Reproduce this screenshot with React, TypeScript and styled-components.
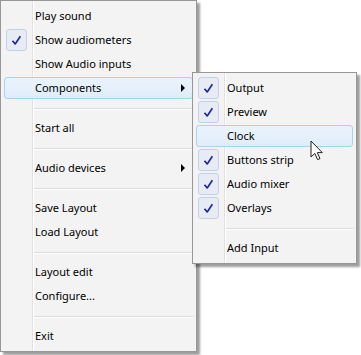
import React from 'react'
import styled, { createGlobalStyle } from 'styled-components'

const GlobalStyle = createGlobalStyle`
    html, body {
        margin: 0;
        padding: 0;
        background: #ffffff;
    }
    body {
        font-family: 'Noto Sans', 'Open Sans', sans-serif;
        font-size: 11px;
        color: #000000;
    }
`

type Entry =
    | { kind: 'item'; label: string; checked?: boolean; hot?: boolean; submenu?: boolean }
    | { kind: 'sep' }

const mainEntries: Entry[] = [
    { kind: 'item', label: 'Play sound' },
    { kind: 'item', label: 'Show audiometers', checked: true },
    { kind: 'item', label: 'Show Audio inputs' },
    { kind: 'item', label: 'Components', hot: true, submenu: true },
    { kind: 'sep' },
    { kind: 'item', label: 'Start all' },
    { kind: 'sep' },
    { kind: 'item', label: 'Audio devices', submenu: true },
    { kind: 'sep' },
    { kind: 'item', label: 'Save Layout' },
    { kind: 'item', label: 'Load Layout' },
    { kind: 'sep' },
    { kind: 'item', label: 'Layout edit' },
    { kind: 'item', label: 'Configure...' },
    { kind: 'sep' },
    { kind: 'item', label: 'Exit' }
]

const subEntries: Entry[] = [
    { kind: 'item', label: 'Output', checked: true },
    { kind: 'item', label: 'Preview', checked: true },
    { kind: 'item', label: 'Clock', hot: true },
    { kind: 'item', label: 'Buttons strip', checked: true },
    { kind: 'item', label: 'Audio mixer', checked: true },
    { kind: 'item', label: 'Overlays', checked: true },
    { kind: 'sep' },
    { kind: 'item', label: 'Add Input' }
]

const CheckIcon = () => (
    <svg width="11" height="11" viewBox="0 0 11 11">
        <path d="M1.5 5.8 L4.2 9 L9.4 1.2" fill="none" stroke="#1b239e" strokeWidth="1.6" strokeLinejoin="round" />
    </svg>
)

const Cursor = () => (
    <svg width="14" height="21" viewBox="0 0 14 21">
        <path
            d="M1 1 L1 17 L4.8 13.4 L7.6 19.6 L10 18.6 L7.3 12.6 L12.3 12.6 Z"
            fill="#ffffff"
            stroke="#202020"
            strokeWidth="1"
            strokeLinejoin="round"
        />
    </svg>
)

const MenuList = ({ entries }: { entries: Entry[] }) => (
    <>
        {entries.map((e, i) =>
            e.kind === 'sep' ? (
                <Separator key={i} />
            ) : (
                <Item key={i} hot={e.hot}>
                    <Gutter>
                        {e.checked && (
                            <CheckBox>
                                <CheckIcon />
                            </CheckBox>
                        )}
                    </Gutter>
                    <Label>{e.label}</Label>
                    {e.submenu && <Arrow />}
                </Item>
            )
        )}
    </>
)

const App = () => {
    return (
        <>
            <GlobalStyle />
            <Stage>
                <Menu left={0} top={0} width={197}>
                    <MenuList entries={mainEntries} />
                </Menu>
                <Menu left={192} top={72} width={165}>
                    <MenuList entries={subEntries} />
                </Menu>
                <CursorSpot>
                    <Cursor />
                </CursorSpot>
            </Stage>
        </>
    )
}

const Stage = styled.div`
    position: relative;
    width: 361px;
    height: 355px;
    overflow: hidden;
`

// popup menus float over the page, so they sit at their screen spots
const Menu = styled.div<{ left: number; top: number; width: number }>`
    position: absolute;
    left: ${({ left }) => left}px;
    top: ${({ top }) => top}px;
    width: ${({ width }) => width}px;
    box-sizing: border-box;
    display: flex;
    flex-direction: column;
    padding: 4px 3px 2px 3px;
    background: #f3f3f3;
    border: 1px solid #979797;
    box-shadow: 3px 3px 2px rgba(0, 0, 0, 0.38);

    &::before {
        content: '';
        position: absolute;
        top: 0;
        bottom: 0;
        left: 31px;
        width: 1px;
        background: #e1e1e1;
        box-shadow: 1px 0 0 #ffffff;
    }
`

const Item = styled.div<{ hot?: boolean }>`
    position: relative;
    box-sizing: border-box;
    height: 22px;
    margin-bottom: 2px;
    display: flex;
    align-items: center;
    border: 1px solid ${({ hot }) => (hot ? '#a8d3ee' : 'transparent')};
    border-radius: 3px;
    background: ${({ hot }) => (hot ? 'linear-gradient(#eaf3fc, #dfedf9)' : 'transparent')};
`

const Gutter = styled.span`
    flex: none;
    width: 30px;
    height: 100%;
    display: flex;
    align-items: center;
    padding-left: 1px;
    box-sizing: border-box;
`

const Label = styled.span`
    flex: 1;
    white-space: nowrap;
    line-height: 16px;
`

const CheckBox = styled.span`
    width: 21px;
    height: 22px;
    margin: -1px 0;
    box-sizing: border-box;
    display: flex;
    align-items: center;
    justify-content: center;
    border: 1px solid #c2d0e8;
    border-radius: 3px;
    background: #e6ebf5;
`

const Arrow = styled.span`
    flex: none;
    margin-right: 7px;
    width: 0;
    height: 0;
    border-left: 4px solid #000000;
    border-top: 4px solid transparent;
    border-bottom: 4px solid transparent;
`

const Separator = styled.div`
    height: 1px;
    margin: 7px 0 7px 29px;
    background: #dcdcdc;
    border-bottom: 1px solid #ffffff;
`

const CursorSpot = styled.div`
    position: absolute;
    left: 310px;
    top: 140px;
    line-height: 0;
`

export default App
